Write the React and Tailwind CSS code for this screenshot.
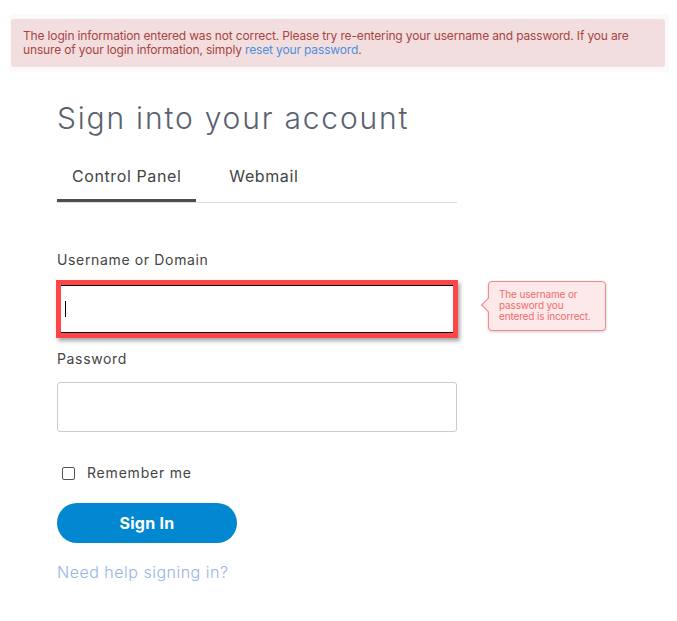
import React from 'react';

export default function App() {
  return (
    <div className="min-h-[621px] bg-white font-['Inter','Liberation_Sans',sans-serif]">
      {/* Error alert */}
      <div className="ml-[10px] pt-[14px]">
        <div className="w-[659px] bg-[#fafafa] py-[5px] pl-px pr-[4px]">
          <div className="rounded-[3px] bg-[#f2dede] px-3 py-[10px] text-[12px] leading-[14px] tracking-[-0.15px] text-[#a94442]">
            The login information entered was not correct. Please try re-entering your username and password. If you are
            unsure of your login information, simply <a className="text-[#4a8fe0]">reset your password</a>.
          </div>
        </div>
      </div>

      {/* Form */}
      <div className="ml-[57px] w-[400px]">
        <h1 className="mt-[28px] text-[30px] font-light leading-[36px] tracking-[1.8px] text-[#5a6270]">
          Sign into your account
        </h1>

        <div className="mt-[28px] flex border-b border-[#dddddd]">
          <div className="border-b-[3px] border-[#4a4d52] px-[15px] pb-[11px] text-[16px] leading-[24px] tracking-[0.6px] text-[#444]">
            Control Panel
          </div>
          <div className="ml-[18px] px-[15px] pb-[11px] text-[16px] leading-[24px] tracking-[0.6px] text-[#444]">
            Webmail
          </div>
        </div>

        <div className="mt-[47px] text-[14px] leading-[20px] tracking-[0.65px] text-[#444]">Username or Domain</div>

        <div className="relative mt-[10px]">
          <div className="-ml-px w-[402px] border-[5px] border-[#ff4545] shadow-[2px_3px_4px_rgba(0,0,0,0.35)]">
            <div className="flex h-[48px] items-center border-y border-black bg-white pl-[4px]">
              <div className="h-[16px] w-px bg-black" />
            </div>
          </div>

          {/* Validation tooltip */}
          <div className="absolute left-[431px] top-[1px] h-[50px] w-[118px] rounded-[4px] border border-[#f08a8a] bg-[#fde9e9] pl-[10px] pt-[7px] text-[10px] leading-[11px] tracking-[-0.15px] text-[#f26b6b] shadow-[0_1px_3px_rgba(0,0,0,0.2)]">
            <div className="absolute left-[-6px] top-[18px] h-[10px] w-[10px] rotate-45 border-b border-l border-[#f08a8a] bg-[#fde9e9]" />
            <div className="relative">
              The username or
              <br />
              password you
              <br />
              entered is incorrect.
            </div>
          </div>
        </div>

        <div className="mt-[11px] text-[14px] leading-[20px] tracking-[0.65px] text-[#444]">Password</div>
        <div className="mt-[13px] h-[50px] w-[400px] rounded-[3px] border border-[#cccccc] bg-white" />

        <div className="mt-[31px] flex items-center text-[14px] leading-[20px] tracking-[0.8px] text-[#444]">
          <div className="ml-[5px] h-[13px] w-[13px] rounded-[2px] border border-[#555]" />
          <span className="ml-[12px]">Remember me</span>
        </div>

        <button className="mt-[20px] flex h-[40px] w-[180px] items-center justify-center rounded-full bg-[#0288d1] text-[16px] font-bold tracking-[0.3px] text-white">
          Sign In
        </button>

        <div className="mt-[17px] text-[16px] font-light leading-[24px] tracking-[0.5px] text-[#98b4e4]">Need help signing in?</div>
      </div>
    </div>
  );
}
